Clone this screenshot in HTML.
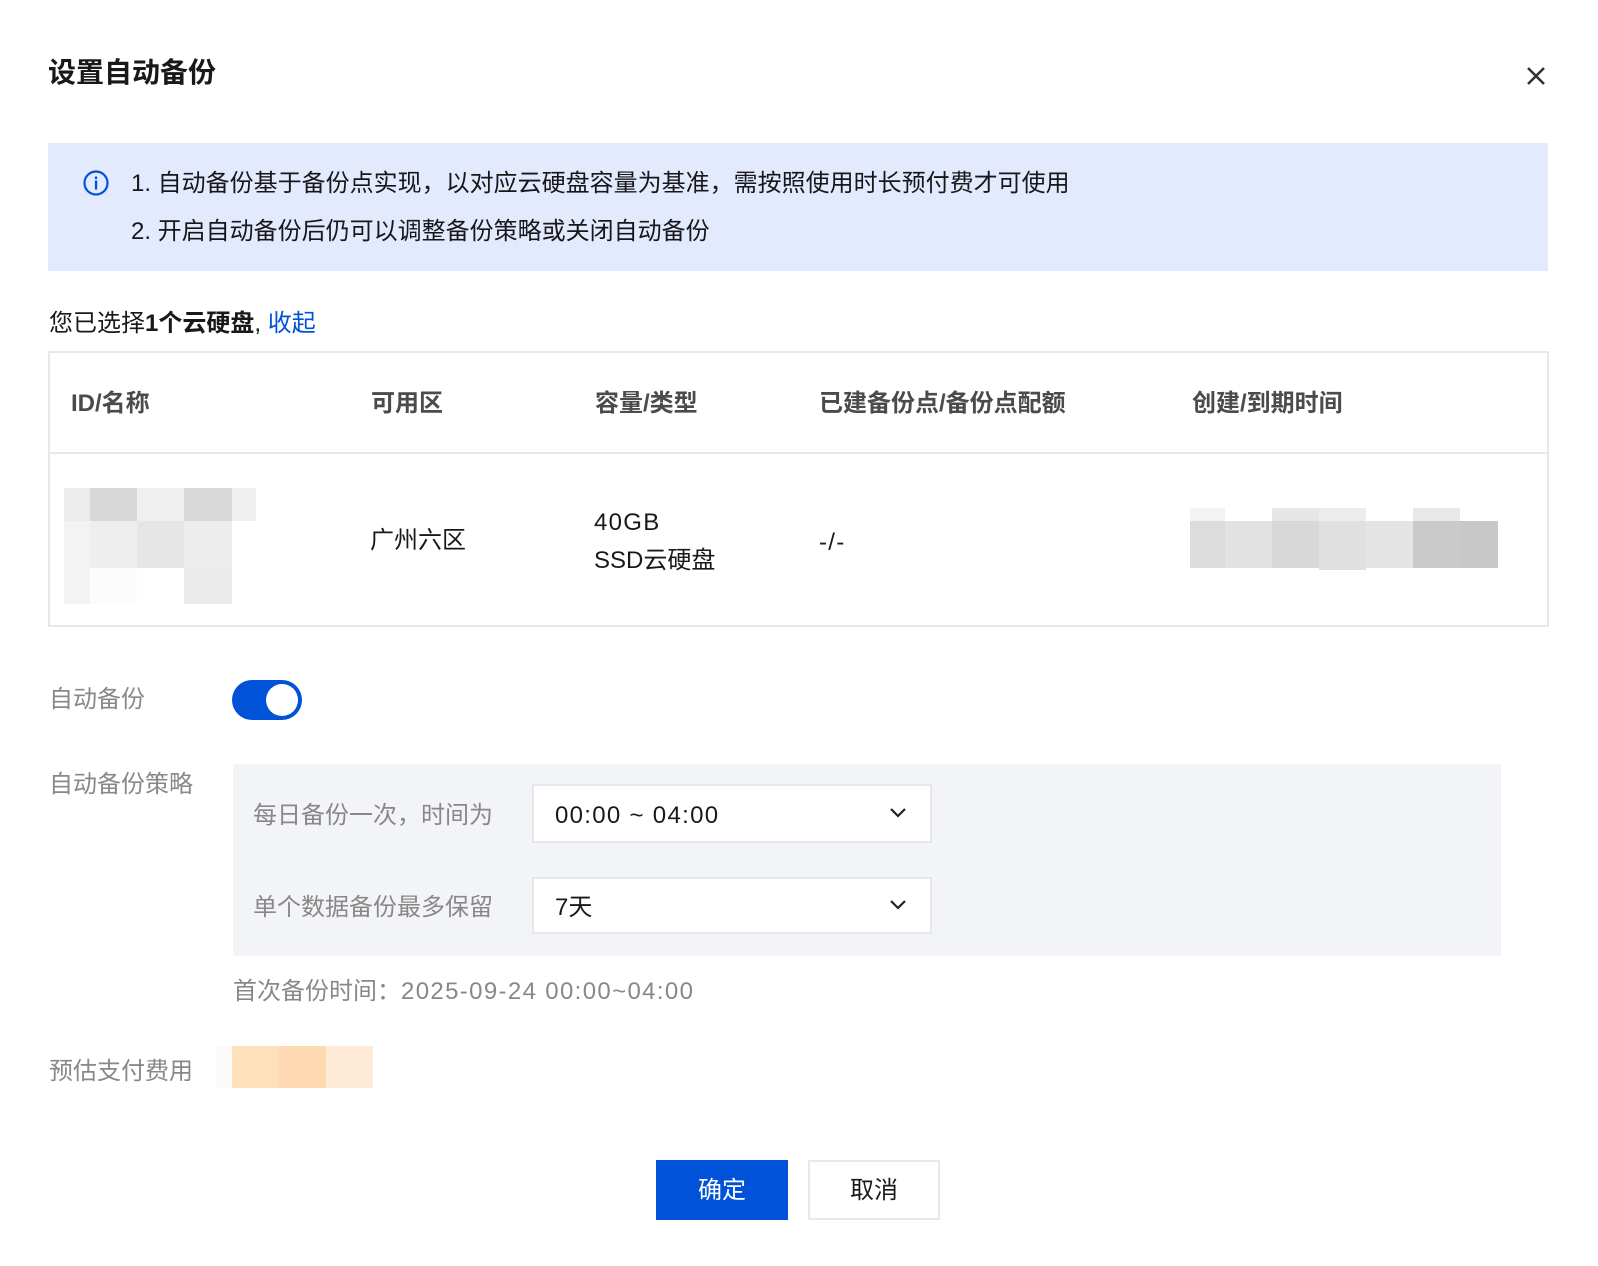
<!DOCTYPE html>
<html><head><meta charset="utf-8"><style>
*{margin:0;padding:0;box-sizing:border-box}
body{width:1598px;height:1266px;background:#fff;position:relative;overflow:hidden;font-family:"Liberation Sans","Noto Sans CJK SC",sans-serif;font-size:24px;color:rgba(0,0,0,.9)}
.a{position:absolute;white-space:nowrap;line-height:32px}
.g{color:#888}
.b{position:absolute}
.hd{font-weight:bold;color:#4b4b4b}
.n{letter-spacing:1.3px}
</style></head><body>
<div class="a" style="left:48px;top:56px;font-size:28px;font-weight:bold;line-height:34px">设置自动备份</div>
<svg class="b" style="left:1525px;top:65px" width="22" height="22" viewBox="0 0 22 22"><path d="M3 3L19 19M19 3L3 19" stroke="#333" stroke-width="2.6"/></svg>

<div class="b" style="left:48px;top:143px;width:1500px;height:128px;background:#e3eafd"></div>
<svg class="b" style="left:83px;top:170px" width="26" height="26" viewBox="0 0 26 26"><circle cx="13" cy="13" r="11.5" fill="none" stroke="#0052d9" stroke-width="2.2"/><rect x="11.9" y="6.5" width="2.3" height="2.6" fill="#0052d9"/><rect x="11.9" y="10.5" width="2.3" height="9" fill="#0052d9"/></svg>
<div class="a" style="left:131px;top:168px">1. 自动备份基于备份点实现，以对应云硬盘容量为基准，需按照使用时长预付费才可使用</div>
<div class="a" style="left:131px;top:216px">2. 开启自动备份后仍可以调整备份策略或关闭自动备份</div>

<div class="a" style="left:49px;top:308px">您已选择<b>1个云硬盘</b>, <span style="color:#0052d9">收起</span></div>

<div class="b" style="left:48px;top:351px;width:1501px;height:276px;border:2px solid #e7e7ee"></div>
<div class="b" style="left:50px;top:452px;width:1497px;height:2px;background:#e7e7ee"></div>
<div class="a hd" style="left:71px;top:388px">ID/名称</div>
<div class="a hd" style="left:371px;top:388px">可用区</div>
<div class="a hd" style="left:595px;top:388px">容量/类型</div>
<div class="a hd" style="left:819px;top:388px">已建备份点/备份点配额</div>
<div class="a hd" style="left:1192px;top:388px">创建/到期时间</div>

<svg class="b" style="left:64px;top:488px" width="192" height="116">
<rect x="0" y="0" width="26" height="33" fill="#ececec"/><rect x="26" y="0" width="47" height="33" fill="#d7d7d7"/><rect x="73" y="0" width="47" height="33" fill="#efefef"/><rect x="120" y="0" width="48" height="33" fill="#d9d9d9"/><rect x="168" y="0" width="24" height="33" fill="#efefef"/>
<rect x="0" y="33" width="26" height="47" fill="#f3f3f3"/><rect x="26" y="33" width="47" height="47" fill="#eeeeee"/><rect x="73" y="33" width="47" height="47" fill="#e6e6e6"/><rect x="120" y="33" width="48" height="47" fill="#ededed"/>
<rect x="0" y="80" width="26" height="36" fill="#f3f3f3"/><rect x="26" y="80" width="47" height="36" fill="#fcfcfc"/><rect x="120" y="80" width="48" height="36" fill="#ebebeb"/>
</svg>
<div class="a" style="left:370px;top:525px">广州六区</div>
<div class="a n" style="left:594px;top:507px">40GB</div>
<div class="a" style="left:594px;top:545px">SSD云硬盘</div>
<div class="a n" style="left:819px;top:527px">-/-</div>
<svg class="b" style="left:1190px;top:508px" width="308" height="62">
<rect x="0" y="0" width="35" height="13" fill="#f3f3f3"/><rect x="82" y="0" width="47" height="13" fill="#e6e6e6"/><rect x="129" y="0" width="47" height="13" fill="#ececec"/><rect x="223" y="0" width="47" height="13" fill="#e8e8e8"/>
<rect x="0" y="13" width="35" height="47" fill="#dcdcdc"/><rect x="35" y="13" width="47" height="47" fill="#e2e2e2"/><rect x="82" y="13" width="47" height="47" fill="#d8d8d8"/><rect x="129" y="13" width="47" height="50" fill="#e0e0e0"/><rect x="176" y="13" width="47" height="47" fill="#e4e4e4"/><rect x="223" y="13" width="47" height="47" fill="#cacaca"/><rect x="270" y="13" width="38" height="47" fill="#c8c8c8"/>
</svg>

<div class="a g" style="left:49px;top:684px">自动备份</div>
<div class="b" style="left:232px;top:680px;width:70px;height:40px;border-radius:20px;background:#0052d9"></div>
<div class="b" style="left:266px;top:684px;width:32px;height:32px;border-radius:50%;background:#fff"></div>

<div class="a g" style="left:49px;top:769px">自动备份策略</div>
<div class="b" style="left:233px;top:764px;width:1268px;height:192px;background:#f3f4f7"></div>
<div class="a g" style="left:253px;top:800px">每日备份一次，时间为</div>
<div class="a g" style="left:253px;top:892px">单个数据备份最多保留</div>
<div class="b" style="left:532px;top:784px;width:400px;height:59px;background:#fff;border:2px solid #e7e7ee"></div>
<div class="b" style="left:532px;top:877px;width:400px;height:57px;background:#fff;border:2px solid #e7e7ee"></div>
<div class="a n" style="left:555px;top:800px">00:00 ~ 04:00</div>
<div class="a" style="left:555px;top:892px">7天</div>
<svg class="b" style="left:889px;top:806px" width="18" height="12" viewBox="0 0 18 12"><path d="M2 3L9 10L16 3" fill="none" stroke="#222" stroke-width="2.2"/></svg>
<svg class="b" style="left:889px;top:898px" width="18" height="12" viewBox="0 0 18 12"><path d="M2 3L9 10L16 3" fill="none" stroke="#222" stroke-width="2.2"/></svg>

<div class="a g" style="left:233px;top:976px">首次备份时间：<span style="letter-spacing:1.35px">2025-09-24 00:00~04:00</span></div>

<div class="a g" style="left:49px;top:1056px">预估支付费用</div>
<div class="b" style="left:216px;top:1046px;width:16px;height:42px;background:#fcfbf9"></div>
<div class="b" style="left:232px;top:1046px;width:47px;height:42px;background:#fee0bb"></div>
<div class="b" style="left:279px;top:1046px;width:47px;height:42px;background:#fed9b2"></div>
<div class="b" style="left:326px;top:1046px;width:47px;height:42px;background:#feead6"></div>

<div class="b" style="left:656px;top:1160px;width:132px;height:60px;background:#0052d9;color:#fff;text-align:center;line-height:62px">确定</div>
<div class="b" style="left:808px;top:1160px;width:132px;height:60px;border:2px solid #e7e7ee;text-align:center;line-height:58px">取消</div>
</body></html>
